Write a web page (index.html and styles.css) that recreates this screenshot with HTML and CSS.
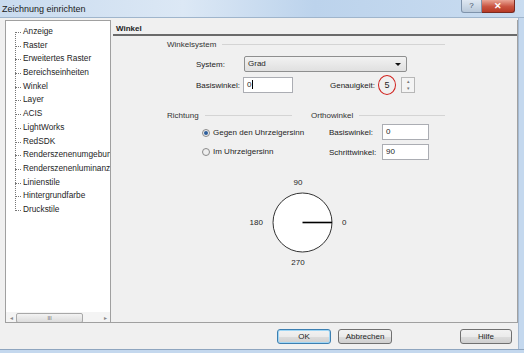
FILE: index.html
```
<!DOCTYPE html>
<html lang="de">
<head>
    <meta charset="UTF-8">
    <title>Zeichnung einrichten</title>
    <link rel="stylesheet" href="styles.css">
</head>
<body>

<div class="window">
    <div class="titlebar">
        <span class="title">Zeichnung einrichten</span>
        <div class="caption-btns">
            <span class="cap-help">?</span>
            <span class="cap-close">&#x2715;</span>
        </div>
    </div>

    <div class="frame-row">
        <div class="client">
            <div class="main">
                <!-- Baum links -->
                <div class="tree">
                    <ul class="tree-list">
                        <li>Anzeige</li>
                        <li>Raster</li>
                        <li>Erweitertes Raster</li>
                        <li>Bereichseinheiten</li>
                        <li>Winkel</li>
                        <li>Layer</li>
                        <li>ACIS</li>
                        <li>LightWorks</li>
                        <li>RedSDK</li>
                        <li>Renderszenenumgebung</li>
                        <li>Renderszenenluminanz</li>
                        <li>Linienstile</li>
                        <li>Hintergrundfarbe</li>
                        <li>Druckstile</li>
                    </ul>
                    <div class="hscroll">
                        <span class="arrow">&#x25C2;</span>
                        <div class="track">
                            <div class="thumb">III</div>
                        </div>
                        <span class="arrow">&#x25B8;</span>
                    </div>
                </div>

                <!-- Seite rechts -->
                <div class="page">
                    <div class="page-title">Winkel</div>

                    <div class="group-head winkelsystem"><span>Winkelsystem</span><i></i></div>
                    <div class="row row-system">
                        <label class="lbl">System:</label>
                        <div class="select">Grad<span class="caret"></span></div>
                    </div>
                    <div class="row row-basis">
                        <label class="lbl">Basiswinkel:</label>
                        <div class="input input-basis">0<span class="cursor"></span></div>
                        <label class="lbl lbl-gen">Genauigkeit:</label>
                        <div class="prec">
                            <span class="prec-val">5</span>
                            <span class="ring"></span>
                        </div>
                        <div class="spin"><span>&#x25B4;</span><span>&#x25BE;</span></div>
                    </div>

                    <div class="two-cols">
                        <div class="col col-richtung">
                            <div class="group-head"><span>Richtung</span><i></i></div>
                            <div class="radio-row"><span class="radio checked"></span>Gegen den Uhrzeigersinn</div>
                            <div class="radio-row"><span class="radio"></span>Im Uhrzeigersinn</div>
                        </div>
                        <div class="col col-ortho">
                            <div class="group-head"><span>Orthowinkel</span><i></i></div>
                            <div class="field-row"><label class="lbl">Basiswinkel:</label><div class="input small">0</div></div>
                            <div class="field-row"><label class="lbl">Schrittwinkel:</label><div class="input small">90</div></div>
                        </div>
                    </div>

                    <div class="dial">
                        <span class="dial-top">90</span>
                        <div class="dial-mid">
                            <span class="dial-left">180</span>
                            <svg width="61" height="61" viewBox="0 0 61 61">
                                <circle cx="30.5" cy="30.5" r="29.5" fill="#fff" stroke="#333" stroke-width="1"/>
                                <line x1="30.5" y1="30.5" x2="60" y2="30.5" stroke="#000" stroke-width="1.6"/>
                            </svg>
                            <span class="dial-right">0</span>
                        </div>
                        <span class="dial-bottom">270</span>
                    </div>
                </div>
            </div>

            <div class="footer">
                <button class="btn default">OK</button>
                <button class="btn">Abbrechen</button>
                <span class="spacer"></span>
                <button class="btn">Hilfe</button>
            </div>
        </div>
        <div class="frame-right"></div>
    </div>
    <div class="frame-bottom"></div>
</div>

</body>
</html>
```

FILE: styles.css
```
html, body {
    margin: 0;
    padding: 0;
}

body {
    font-family: 'Liberation Sans', Arial, sans-serif;
    font-size: 8px;
    color: #1e1e1e;
    width: 524px;
    height: 353px;
    overflow: hidden;
}

.window {
    display: flex;
    flex-direction: column;
    width: 524px;
    height: 353px;
    background-color: #c6d9ee;
}

.titlebar {
    height: 17px;
    display: flex;
    justify-content: space-between;
    background: linear-gradient(90deg, #c9dbef 0%, #dce8f5 35%, #bcd3ec 60%, #c9dcf0 100%);
    border-bottom: 1px solid #9fb5cc;
}

.title {
    font-size: 9px;
    color: #1a1a1a;
    padding: 4px 0 0 2px;
}

.caption-btns {
    display: flex;
    height: 13px;
    margin-right: 9px;
}

.cap-help {
    width: 19px;
    background: linear-gradient(#dfe8f2, #b9c9da);
    border: 1px solid #7f93ab;
    border-top: none;
    border-radius: 0 0 0 3px;
    text-align: center;
    font-size: 8px;
    line-height: 11px;
    color: #3d4f66;
}

.cap-close {
    width: 32px;
    background: linear-gradient(#e9a595, #c95340 55%, #b73a25);
    border: 1px solid #7a2a20;
    border-top: none;
    border-left: none;
    border-radius: 0 0 3px 0;
    text-align: center;
    color: #fff;
    font-size: 9px;
    font-weight: bold;
    line-height: 12px;
}

.frame-row {
    flex: 1;
    display: flex;
}

.client {
    flex: 1;
    background-color: #f0f0f0;
    display: flex;
    flex-direction: column;
    padding: 2px 0 0 5px;
}

.frame-right {
    width: 6px;
    background: #c4d8ee;
    border-left: 1px solid #a5b9d0;
}

.frame-bottom {
    height: 3px;
    background: #c4d8ee;
    border-top: 1px solid #8ea5bf;
}

.main {
    display: flex;
    height: 303px;
}

/* Baum */
.tree {
    width: 104px;
    background: #fff;
    border: 1px solid #a0a0a0;
    display: flex;
    flex-direction: column;
    overflow: hidden;
}

.tree-list {
    list-style: none;
    margin: 4px 0 0 0;
    padding: 0 0 0 9px;
    flex: 1;
    position: relative;
    font-size: 8.3px;
}

.tree-list::before {
    content: "";
    position: absolute;
    left: 9px;
    top: 7px;
    height: 179px;
    border-left: 1px dotted #777;
}

.tree-list li {
    height: 13.7px;
    line-height: 13.7px;
    white-space: nowrap;
    overflow: hidden;
    padding-left: 8px;
    position: relative;
}

.tree-list li::before {
    content: "";
    position: absolute;
    left: 0;
    top: 7px;
    width: 6px;
    border-top: 1px dotted #777;
}

.hscroll {
    height: 10px;
    display: flex;
    align-items: center;
    background: #f4f4f4;
    font-size: 6px;
    color: #888;
}

.hscroll .arrow {
    width: 10px;
    text-align: center;
}

.track {
    flex: 1;
    height: 9px;
}

.thumb {
    width: 65px;
    height: 8px;
    background: linear-gradient(#f3f3f3, #dcdcdc);
    border: 1px solid #a8a8a8;
    border-radius: 2px;
    text-align: center;
    line-height: 8px;
    font-size: 5px;
    color: #555;
}

/* Seite */
.page {
    width: 406px;
    border-right: 1px solid #a0a0a0;
    border-bottom: 1px solid #a0a0a0;
}

.page-title {
    font-weight: bold;
    padding: 4px 0 0 3px;
    height: 10px;
    border-bottom: 2px solid #6a6a6a;
    margin-left: 2px;
}

.group-head {
    display: flex;
    align-items: center;
    color: #333;
}

.group-head i {
    flex: 1;
    height: 0;
    border-top: 1px solid #d4d4d4;
    margin-left: 6px;
}

.winkelsystem {
    margin: 4px 72px 0 56px;
}

.row {
    display: flex;
    align-items: center;
}

.lbl {
    color: #222;
    white-space: nowrap;
}

.row-system {
    margin: 7px 0 0 85px;
}

.row-system .lbl {
    width: 48px;
}

.select {
    width: 158px;
    height: 14px;
    line-height: 14px;
    padding-left: 3px;
    border: 1px solid #8e8f8f;
    border-radius: 2px;
    background: linear-gradient(#f2f2f2, #e0e0e0);
    position: relative;
}

.caret {
    position: absolute;
    right: 5px;
    top: 6px;
    border-left: 3px solid transparent;
    border-right: 3px solid transparent;
    border-top: 3px solid #111;
}

.row-basis {
    margin: 5px 0 0 85px;
}

.row-basis .lbl {
    width: 47px;
}

.input {
    background: #fff;
    border: 1px solid #abadb3;
    height: 14px;
    line-height: 14px;
    padding-left: 3px;
}

.input-basis {
    width: 45px;
}

.cursor {
    display: inline-block;
    width: 1px;
    height: 9px;
    background: #000;
    vertical-align: middle;
    margin-left: 1px;
}

.lbl-gen {
    margin-left: 37px;
    width: 49px !important;
}

.prec {
    width: 16px;
    height: 16px;
    position: relative;
    text-align: center;
    line-height: 16px;
    font-size: 9px;
}

.ring {
    position: absolute;
    left: -1px;
    top: -2px;
    width: 16px;
    height: 18px;
    border: 1.5px solid #d0211d;
    border-radius: 50%;
}

.spin {
    margin-left: 6px;
    width: 12px;
    height: 14px;
    border: 1px solid #b7b7b7;
    display: flex;
    flex-direction: column;
    font-size: 5px;
    color: #777;
    line-height: 7px;
    text-align: center;
    background: #f4f4f4;
}

.two-cols {
    display: flex;
    margin-top: 18px;
}

.col-richtung {
    margin-left: 56px;
    width: 125px;
    flex: none;
}

.col-ortho {
    margin-left: 19px;
    width: 134px;
    flex: none;
}

.radio-row {
    display: flex;
    align-items: center;
    white-space: nowrap;
    margin-left: 35px;
    height: 13px;
    margin-top: 6px;
}

.radio-row + .radio-row {
    margin-top: 6px;
}

.radio {
    flex: none;
    width: 6px;
    height: 6px;
    border: 1px solid #8a8a8a;
    border-radius: 50%;
    background: #eee;
    margin-right: 3px;
    position: relative;
}

.radio.checked::after {
    content: "";
    position: absolute;
    left: 1px;
    top: 1px;
    width: 4px;
    height: 4px;
    border-radius: 50%;
    background: #2c5d9a;
}

.field-row {
    display: flex;
    align-items: center;
    margin-top: 4px;
    margin-left: 18px;
}

.field-row:first-of-type {
    margin-top: 5px;
}

.field-row .lbl {
    width: 53px;
}

.input.small {
    width: 42px;
}

.dial {
    display: flex;
    flex-direction: column;
    align-items: center;
    width: 120px;
    margin: 18px 0 0 127px;
}

.dial-mid {
    display: flex;
    align-items: center;
}

.dial-mid svg {
    display: block;
    margin: 0 9px;
}

.dial-top {
    margin-bottom: 5px;
}

.dial-bottom {
    margin-top: 5px;
}

/* Buttons unten */
.footer {
    display: flex;
    align-items: center;
    padding: 6px 6px 0 272px;
}

.spacer {
    flex: 1;
}

.btn {
    font-family: 'Liberation Sans', Arial, sans-serif;
    font-size: 8px;
    color: #1e1e1e;
    width: 54px;
    height: 15px;
    padding: 0;
    border: 1px solid #707070;
    border-radius: 3px;
    background: linear-gradient(#f2f2f2 0%, #ebebeb 50%, #dddddd 51%, #cfcfcf 100%);
    margin-right: 7px;
}

.btn:last-child {
    width: 52px;
    margin-right: 0;
}

.btn.default {
    border-color: #3c7fb1;
    box-shadow: inset 0 0 0 1px #9fd6f5;
}
```
